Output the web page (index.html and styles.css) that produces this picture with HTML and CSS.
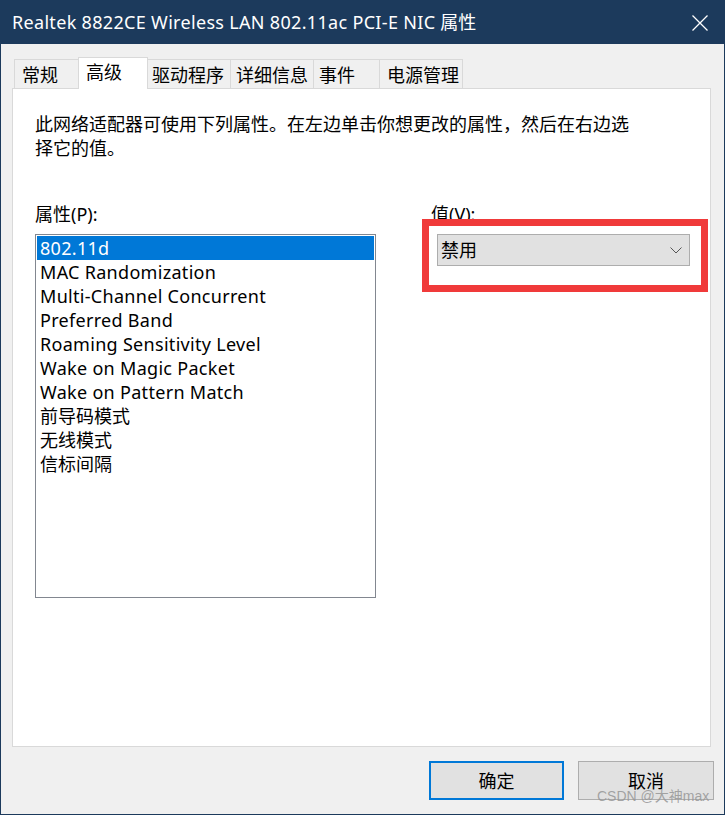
FILE: index.html
```html
<!DOCTYPE html>
<html lang="zh-CN">
<head>
<meta charset="utf-8">
<title>Realtek 8822CE Wireless LAN 802.11ac PCI-E NIC 属性</title>
<link rel="stylesheet" href="styles.css">
</head>
<body>
<div class="window">
  <div class="titlebar">
    <span class="title">Realtek 8822CE Wireless LAN 802.11ac PCI-E NIC <span class="zh">属性</span></span>
    <svg class="close" width="16" height="16" viewBox="0 0 16 16"><path d="M0.5 0.5L15.5 15.5M15.5 0.5L0.5 15.5" stroke="#ffffff" stroke-width="1.3" fill="none"/></svg>
  </div>
  <div class="frame">
    <div class="tabs">
      <div class="tab tab-general">常规</div>
      <div class="tab tab-advanced active">高级</div>
      <div class="tab tab-driver">驱动程序</div>
      <div class="tab tab-details">详细信息</div>
      <div class="tab tab-events">事件</div>
      <div class="tab tab-power">电源管理</div>
    </div>
    <div class="panel">
      <p class="desc">此网络适配器可使用下列属性。在左边单击你想更改的属性，然后在右边选<br>择它的值。</p>
      <div class="cols">
        <div class="col-left">
          <div class="label">属性(P):</div>
          <ul class="list">
            <li class="selected">802.11d</li>
            <li>MAC Randomization</li>
            <li>Multi-Channel Concurrent</li>
            <li>Preferred Band</li>
            <li>Roaming Sensitivity Level</li>
            <li>Wake on Magic Packet</li>
            <li>Wake on Pattern Match</li>
            <li class="zh">前导码模式</li>
            <li class="zh">无线模式</li>
            <li class="zh">信标间隔</li>
          </ul>
        </div>
        <div class="col-right">
          <div class="label">值(V):</div>
          <div class="combo">
            <span>禁用</span>
            <svg class="chev" width="12" height="7" viewBox="0 0 12 7"><path d="M0.5 0.5L6 6L11.5 0.5" stroke="#555555" stroke-width="1" fill="none"/></svg>
          </div>
        </div>
      </div>
    </div>
    <div class="buttons">
      <div class="btn btn-default">确定</div>
      <div class="btn">取消</div>
    </div>
  </div>
  <div class="annot"></div>
  <div class="watermark">CSDN @大神max</div>
</div>
</body>
</html>
```
FILE: styles.css
```css
* { box-sizing: border-box; }
html, body { margin: 0; padding: 0; }
body {
  width: 725px;
  height: 815px;
  overflow: hidden;
  font-family: "Noto Sans", "Noto Sans CJK SC", sans-serif;
  font-size: 18px;
  color: #000;
}
.window {
  position: relative;
  width: 725px;
  height: 815px;
  display: flex;
  flex-direction: column;
}
.titlebar {
  height: 44px;
  flex: none;
  background: #1c3a5c;
  display: flex;
  align-items: center;
  justify-content: space-between;
  padding: 0 17px 0 12px;
}
.title {
  color: #fff;
  font-size: 18px;
  line-height: 24px;
  white-space: nowrap;
  letter-spacing: 0.32px;
}
.zh { letter-spacing: 0; }
.close { display: block; margin-top: 1px; }
.frame {
  flex: 1;
  background: #f0f0f0;
  border: 1px solid #1c3a5c;
  border-top: none;
  display: flex;
  flex-direction: column;
}
.tabs {
  display: flex;
  align-items: flex-end;
  margin-top: 13px;
  padding-left: 14px;
  height: 31px;
  position: relative;
  z-index: 1;
}
.tab {
  height: 29px;
  border: 1px solid #d9d9d9;
  border-bottom: none;
  margin-left: -1px;
  background: #f0f0f0;
  padding: 3px 0 0 6px;
  line-height: 24px;
  white-space: nowrap;
}
.tab.active {
  height: 32px;
  margin-bottom: -1px;
  background: #fff;
  padding-top: 2px;
  position: relative;
  z-index: 2;
}
.tab-general { width: 65px; padding-left: 7px; }
.tab-advanced { width: 70px; padding-left: 7px; }
.tab-driver { width: 84px; padding-left: 4px; }
.tab-details { width: 84px; padding-left: 5px; }
.tab-events { width: 67px; padding-left: 5px; }
.tab-power { width: 84px; padding-left: 7px; }
.panel {
  margin-left: 11px;
  width: 699px;
  height: 659px;
  background: #fff;
  border: 1px solid #d9d9d9;
  padding: 23px 0 0 22px;
}
.desc {
  margin: 0;
  line-height: 24px;
}
.cols {
  display: flex;
  margin-top: 42px;
}
.label {
  line-height: 24px;
  height: 24px;
  margin-bottom: 8px;
  white-space: nowrap;
}
.col-left { width: 341px; }
.list {
  list-style: none;
  margin: 0;
  padding: 1px;
  width: 341px;
  height: 364px;
  border: 1px solid #828790;
}
.list li {
  height: 24px;
  line-height: 24px;
  padding-left: 3px;
  white-space: nowrap;
  letter-spacing: 0.3px;
}
.list li.zh { letter-spacing: 0; }
.list li.selected {
  background: #0078d7;
  color: #fff;
}
.col-right {
  margin-left: 55px;
}
.combo {
  margin-left: 6px;
  width: 253px;
  height: 32px;
  background: #e1e1e1;
  border: 1px solid #adadad;
  display: flex;
  align-items: center;
  justify-content: space-between;
  padding: 0 7px 0 3px;
  line-height: 24px;
}
.chev { display: block; }
.buttons {
  display: flex;
  justify-content: flex-end;
  gap: 14px;
  margin-top: 14px;
  padding-right: 10px;
}
.btn {
  width: 136px;
  height: 39px;
  background: #e1e1e1;
  border: 1px solid #adadad;
  display: flex;
  align-items: center;
  justify-content: center;
  line-height: 24px;
}
.btn-default {
  width: 135px;
  border: 2px solid #0078d7;
}
.annot {
  position: absolute;
  left: 422px;
  top: 219px;
  width: 286px;
  height: 73px;
  border: 7px solid #f03a3a;
}
.watermark {
  position: absolute;
  left: 597px;
  top: 787px;
  font-family: "Liberation Sans", "Noto Sans CJK SC", sans-serif;
  font-size: 14px;
  line-height: 18px;
  color: rgba(150, 150, 150, 0.85);
  white-space: nowrap;
}
```
